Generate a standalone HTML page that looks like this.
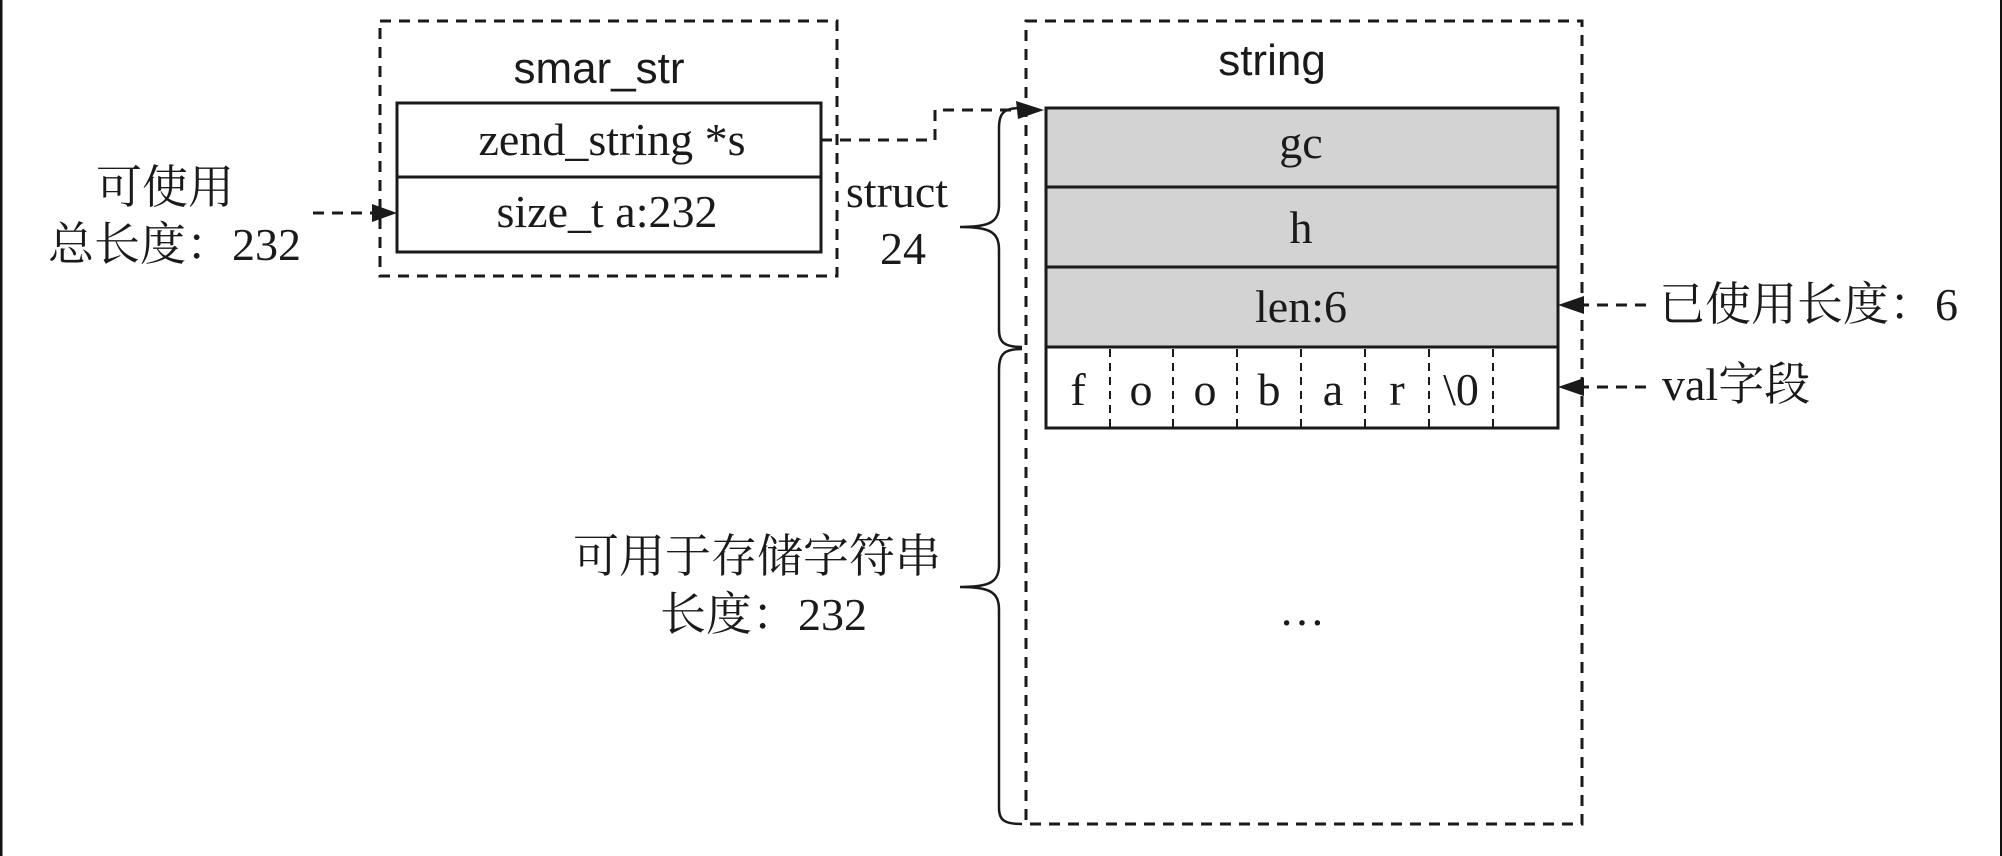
<!DOCTYPE html>
<html><head><meta charset="utf-8"><style>
html,body{margin:0;padding:0;background:#fff;}
svg{display:block;}
.s{font-family:"Liberation Serif","Noto Serif CJK SC",serif;font-size:46px;fill:#1a1a1a;}
.a{font-family:"Liberation Sans","Noto Sans CJK SC",sans-serif;font-size:44px;fill:#1a1a1a;}
</style></head><body>
<svg width="2002" height="856" viewBox="0 0 2002 856" xmlns="http://www.w3.org/2000/svg">
<rect x="0" y="0" width="2002" height="856" fill="#fff"/>
<line x1="1" y1="0" x2="1" y2="856" stroke="#111" stroke-width="3"/>
<line x1="2001" y1="0" x2="2001" y2="856" stroke="#111" stroke-width="2"/>
<g fill="none" stroke="#1a1a1a" stroke-width="3" stroke-dasharray="11 8">
<rect x="380" y="21" width="457" height="255"/>
<rect x="1026" y="21" width="556" height="803"/>
<polyline points="821,140 935,140 935,110 1020,110"/>
<line x1="313" y1="213" x2="378" y2="213"/>
<line x1="1646" y1="305" x2="1580" y2="305"/>
<line x1="1646" y1="387" x2="1580" y2="387"/>
</g>
<g stroke="#1a1a1a" stroke-width="2" stroke-dasharray="8 6">
<line x1="1110" y1="349" x2="1110" y2="428"/>
<line x1="1173" y1="349" x2="1173" y2="428"/>
<line x1="1237" y1="349" x2="1237" y2="428"/>
<line x1="1301" y1="349" x2="1301" y2="428"/>
<line x1="1365" y1="349" x2="1365" y2="428"/>
<line x1="1429" y1="349" x2="1429" y2="428"/>
<line x1="1493" y1="349" x2="1493" y2="428"/>
</g>
<g fill="#d3d3d3" stroke="#1a1a1a" stroke-width="3">
<rect x="1046" y="108" width="512" height="79"/>
<rect x="1046" y="187" width="512" height="80"/>
<rect x="1046" y="267" width="512" height="80"/>
</g>
<rect x="1046" y="347" width="512" height="81" fill="none" stroke="#1a1a1a" stroke-width="3"/>
<rect x="397" y="103" width="424" height="74" fill="#fff" stroke="#1a1a1a" stroke-width="3"/>
<rect x="397" y="177" width="424" height="75" fill="#fff" stroke="#1a1a1a" stroke-width="3"/>
<g fill="#1a1a1a">
<polygon points="1044,110 1016,101 1018,119"/>
<polygon points="397,213 372,204 372,222"/>
<polygon points="1558,305 1584,296 1584,314"/>
<polygon points="1558,387 1584,378 1584,396"/>
</g>
<g fill="none" stroke="#1a1a1a" stroke-width="2.5">
<path d="M1020,108 C1003,108 999,114 999,128 L999,205 C999,222 990,227 960,227 C990,227 999,232 999,250 L999,330 C999,342 1004,347 1022,347"/>
<path d="M1022,349 C1004,349 999,354 999,370 L999,565 C999,582 990,587 960,587 C990,587 999,592 999,610 L999,808 C999,820 1004,824 1022,824"/>
</g>
<text class="a" x="599" y="83" text-anchor="middle">smar_str</text>
<text class="a" x="1272" y="75" text-anchor="middle">string</text>
<text class="s" x="612" y="155" text-anchor="middle">zend_string *s</text>
<text class="s" x="607" y="227" text-anchor="middle">size_t a:232</text>
<text class="s" x="1301" y="158" text-anchor="middle">gc</text>
<text class="s" x="1301" y="243" text-anchor="middle">h</text>
<text class="s" x="1301" y="322" text-anchor="middle">len:6</text>
<g class="s" text-anchor="middle">
<text x="1078" y="405">f</text><text x="1141" y="405">o</text><text x="1205" y="405">o</text>
<text x="1269" y="405">b</text><text x="1333" y="405">a</text><text x="1397" y="405">r</text>
<text x="1461" y="405">\0</text>
</g>
<text class="s" x="1659" y="320">已使用长度：6</text>
<text class="s" x="1662" y="400">val字段</text>
<text class="s" x="96" y="203">可使用</text>
<text class="s" x="48" y="260">总长度：232</text>
<text class="s" x="897" y="207" text-anchor="middle">struct</text>
<text class="s" x="903" y="264" text-anchor="middle">24</text>
<text class="s" x="573" y="572">可用于存储字符串</text>
<text class="s" x="660" y="630">长度：232</text>
<text class="s" x="1302" y="625" text-anchor="middle">…</text>
</svg>
</body></html>
